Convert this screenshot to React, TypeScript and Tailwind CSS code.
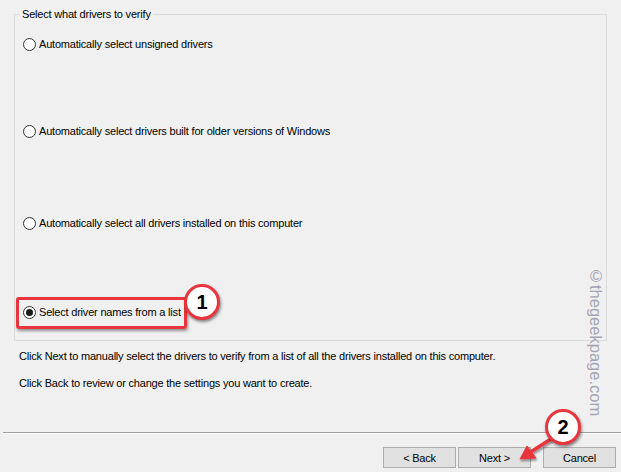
import React from "react";

type Option = { label: string; checked?: boolean; gap: string };

const options: Option[] = [
  { label: "Automatically select unsigned drivers", gap: "mt-[14px]" },
  { label: "Automatically select drivers built for older versions of Windows", gap: "mt-[71px]" },
  { label: "Automatically select all drivers installed on this computer", gap: "mt-[76px]" },
  { label: "Select driver names from a list", checked: true, gap: "mt-[73px]" },
];

function Radio({ checked }: { checked?: boolean }) {
  return (
    <span className="w-[13px] h-[13px] rounded-full border border-[#333333] bg-white flex items-center justify-center shrink-0">
      {checked && <span className="w-[7px] h-[7px] rounded-full bg-[#1a1a1a]" />}
    </span>
  );
}

function Badge({ n }: { n: string }) {
  return (
    <div className="w-[36px] h-[36px] rounded-full bg-white border-[3px] border-[#e8363e] shadow-[1px_2px_3px_rgba(0,0,0,0.45)] flex items-center justify-center">
      <span className="font-['Liberation_Sans',Arial,sans-serif] font-bold text-[20px] leading-none tracking-normal text-black">{n}</span>
    </div>
  );
}

export default function App() {
  return (
    <div className="relative w-[621px] h-[472px] overflow-hidden bg-[#f0f0f0] text-black font-['Liberation_Sans',Arial,sans-serif] text-[11px] leading-[16px] tracking-[-0.2px]">
      <fieldset className="ml-[14px] mt-[6px] w-[593px] h-[335px] border border-[#dcdcdc] pl-[8px]">
        <legend className="-ml-[3px] px-[2px]">Select what drivers to verify</legend>
        {options.map((o) => (
          <div key={o.label} className={`${o.gap} flex items-center gap-[3px] h-[16px]`}>
            <Radio checked={o.checked} />
            <span>{o.label}</span>
          </div>
        ))}
      </fieldset>

      <div className="pl-[19px] mt-[7px]">
        <p>Click Next to manually select the drivers to verify from a list of all the drivers installed on this computer.</p>
        <p className="mt-[11px]">Click Back to review or change the settings you want to create.</p>
      </div>

      <div className="ml-[3px] mt-[41px] border-t border-t-[#a0a0a0] border-b border-b-white" />

      <div className="mt-[13px] flex justify-end pr-[5px]">
        <button className="w-[73px] h-[21px] bg-[#e1e1e1] border border-[#adadad]">&lt; Back</button>
        <button className="ml-[2px] w-[73px] h-[21px] bg-[#e1e1e1] border border-[#adadad]">Next &gt;</button>
        <button className="ml-[12px] w-[73px] h-[21px] bg-[#e1e1e1] border border-[#adadad]">Cancel</button>
      </div>

      {/* annotations */}
      <div className="absolute left-[16px] top-[297px] w-[171px] h-[32px] rounded-[3px] border-[3px] border-[#e8363e] shadow-[1px_2px_3px_rgba(0,0,0,0.4)]" />
      <div className="absolute left-[184px] top-[284px]">
        <Badge n="1" />
      </div>
      <svg className="absolute left-[505px] top-[425px]" width="60" height="45" viewBox="0 0 60 45">
        <defs>
          <filter id="sh" x="-20%" y="-20%" width="150%" height="150%">
            <feDropShadow dx="1" dy="2" stdDeviation="1.2" floodColor="#000" floodOpacity="0.4" />
          </filter>
        </defs>
        <g filter="url(#sh)" fill="#e8363e" stroke="#e8363e">
          <line x1="46" y1="14" x2="24" y2="28" strokeWidth="3.5" strokeLinecap="round" />
          <polygon points="15,34 22,21 31,33" strokeWidth="1" strokeLinejoin="round" />
        </g>
      </svg>
      <div className="absolute left-[545px] top-[409px]">
        <Badge n="2" />
      </div>
      <div className="absolute left-[587px] top-[267px] [writing-mode:vertical-rl] text-[16.5px] leading-[18px] tracking-normal text-[#a4a4b6] font-['Liberation_Sans',Arial,sans-serif]">
        ©thegeekpage.com
      </div>
    </div>
  );
}
